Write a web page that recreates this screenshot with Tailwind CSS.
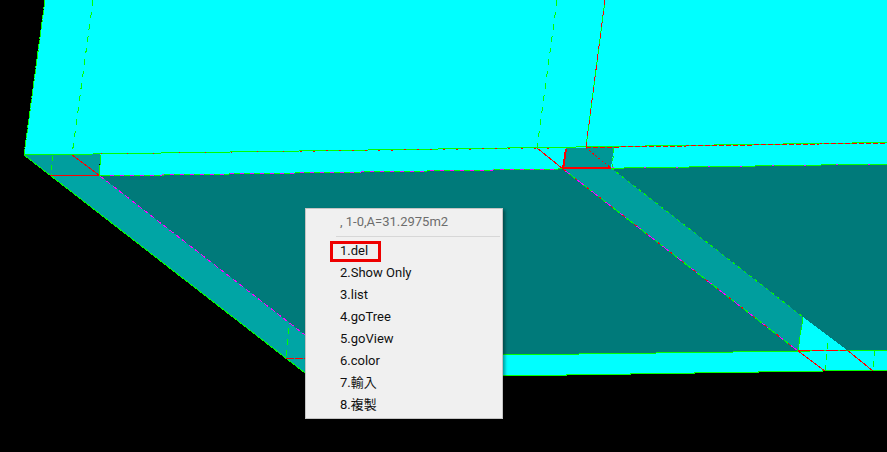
<!DOCTYPE html>
<html lang="en">
<head>
  <meta charset="UTF-8" />
  <title>Model view</title>
  <script src="https://cdn.jsdelivr.net/npm/@tailwindcss/browser@4"></script>
</head>
<body class="bg-black overflow-hidden">
  <div class="relative w-[887px] h-[452px] bg-black overflow-hidden">
    <!-- 3D viewport -->
    <svg class="absolute inset-0" width="887" height="452" viewBox="0 0 887 452" shape-rendering="crispEdges" fill="none">
      <!-- faces -->
      <polygon points="45,0 887,0 887,143 24,155" fill="#00ffff" />
      <polygon points="100,154 887,143 887,164 99,176" fill="#00ffff" />
      <polygon points="99,176 887,164 887,350 503,355 305,372" fill="#007a7a" />
      <polygon points="24,155 100,154 99,175 50,175" fill="#009e9e" />
      <polygon points="50,175 99,175 305,335 305,373" fill="#00a5a5" />
      <polygon points="566,148 614,147 611,168 563,169" fill="#009696" />
      <polygon points="563,169 611,168 803,317 798,351" fill="#009e9e" />
      <polygon points="803,317 847,350 798,351" fill="#00ffff" />
      <polygon points="503,355 887,350 887,370 503,376" fill="#00ffff" />

      <!-- outline edges -->
      <g stroke="#00ff00" stroke-width="1">
        <line x1="45" y1="0" x2="24" y2="155" stroke-dasharray="9 1" />
        <line x1="24" y1="155" x2="887" y2="142.5" />
        <line x1="24" y1="155" x2="305" y2="373" />
        <line x1="99" y1="176" x2="887" y2="164" />
        <line x1="101" y1="155" x2="99" y2="175" />
        <line x1="503" y1="355" x2="887" y2="350" />
        <line x1="503" y1="376" x2="887" y2="370" />
        <line x1="93" y1="0" x2="72" y2="155" stroke-dasharray="6 6" />
        <line x1="53" y1="156" x2="51" y2="175" stroke-dasharray="5 4" />
        <line x1="289" y1="328" x2="286" y2="358" stroke-dasharray="6 5" />
        <line x1="557" y1="0" x2="537" y2="148" stroke-dasharray="6 6" />
        <line x1="605" y1="0" x2="586" y2="147" />
        <line x1="614" y1="148" x2="612" y2="168" stroke-dasharray="5 3" />
        <line x1="611" y1="168" x2="803" y2="317" stroke-dasharray="3 4" />
        <line x1="563" y1="169" x2="798" y2="351" />
        <line x1="828" y1="343" x2="825" y2="370" stroke-dasharray="6 5" />
        <line x1="875" y1="350" x2="873" y2="370" stroke-dasharray="6 5" />
        <line x1="803" y1="317" x2="798" y2="351" stroke-dasharray="8 2" />
      </g>

      <!-- magenta and red overlays -->
      <g stroke="#ff00ff" stroke-width="1">
        <line x1="100" y1="176" x2="305" y2="335" stroke-dasharray="5 3" />
        <line x1="110" y1="175.8" x2="560" y2="169" stroke-dasharray="4 6" />
        <line x1="563" y1="169" x2="798" y2="351" stroke-dasharray="8 10" />
        <line x1="612" y1="168" x2="887" y2="164" stroke-dasharray="2 30" />
      </g>
      <g stroke="#ff0000" stroke-width="1">
        <line x1="72" y1="155" x2="99" y2="175" />
        <line x1="50" y1="175" x2="99" y2="175" />
        <line x1="286" y1="358" x2="305" y2="358" stroke-dasharray="8 1" />
        <line x1="101" y1="154" x2="300" y2="151.2" stroke-dasharray="1 25" />
        <line x1="300" y1="151.2" x2="560" y2="148" stroke-dasharray="2 11" />
        <line x1="605" y1="0" x2="586" y2="147" stroke-dasharray="5 6" />
        <line x1="586" y1="147.5" x2="887" y2="143" stroke-dasharray="5 2" />
        <line x1="537" y1="148" x2="563" y2="169" />
        <line x1="586" y1="148" x2="611" y2="168" stroke-dasharray="2 2" />
        <line x1="563" y1="169" x2="798" y2="351" stroke-dasharray="3 12" />
        <line x1="798" y1="351" x2="825" y2="371" />
        <line x1="847" y1="350" x2="873" y2="371" />
        <line x1="798" y1="351" x2="847" y2="350" stroke-dasharray="12 2" />
        <line x1="566" y1="149" x2="563" y2="169" stroke-width="2" />
        <line x1="563" y1="168.5" x2="611" y2="168" stroke-width="2" />
      </g>
    </svg>

    <!-- context menu -->
    <div class="absolute left-[305px] top-[208px] w-[198px] h-[211px] flex flex-col bg-[#f0f0f0] border border-[#c4c4c4] shadow-[2px_2px_3px_rgba(0,0,0,0.4)] font-['Roboto','Noto_Sans_CJK_TC',sans-serif] text-[13px] leading-[22px] text-[#111]">
      <div class="h-[27px] pl-[34px] pt-[2px] text-[#6d6d6d]">, 1-0,A=31.2975m2</div>
      <div class="h-px ml-[30px] mr-[2px] bg-[#d7d7d7]"></div>
      <ul class="mt-[3px] flex flex-col">
        <li class="relative h-[22px] pl-[34px]">
          1.del
          <span class="absolute left-[24px] top-[1px] w-[51px] h-[21px] border-[3px] border-[#ee0000]"></span>
        </li>
        <li class="h-[22px] pl-[34px]">2.Show Only</li>
        <li class="h-[22px] pl-[34px]">3.list</li>
        <li class="h-[22px] pl-[34px]">4.goTree</li>
        <li class="h-[22px] pl-[34px]">5.goView</li>
        <li class="h-[22px] pl-[34px]">6.color</li>
        <li class="h-[22px] pl-[34px]">7.輸入</li>
        <li class="h-[22px] pl-[34px]">8.複製</li>
      </ul>
    </div>
  </div>
</body>
</html>
